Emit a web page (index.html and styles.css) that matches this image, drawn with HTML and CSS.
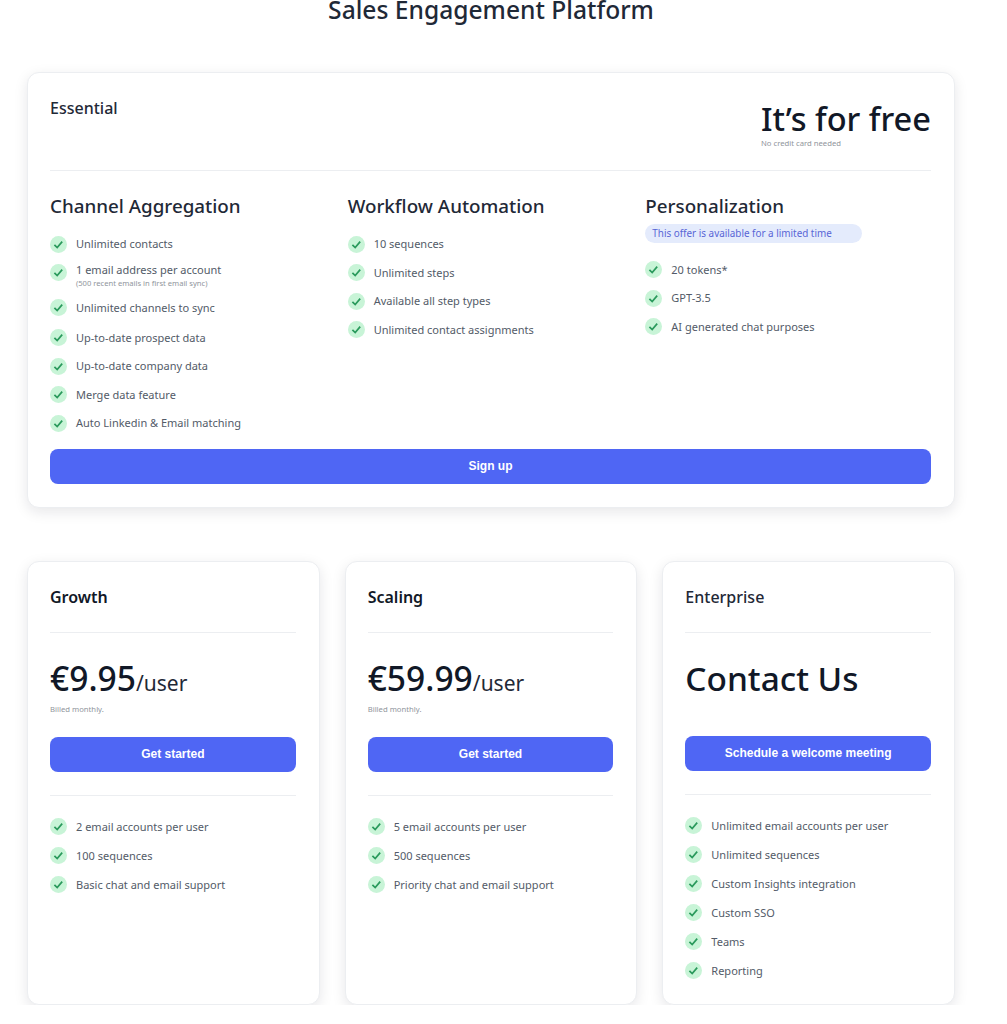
FILE: index.html
```html
<!DOCTYPE html>
<html lang="en">
<head>
    <meta charset="UTF-8">
    <meta name="viewport" content="width=device-width, initial-scale=1.0">
    <title>Sales Engagement Platform</title>
    <link rel="stylesheet" href="styles.css">
</head>
<body>

<svg class="defs" width="0" height="0" aria-hidden="true">
    <symbol id="check" viewBox="0 0 17 17">
        <circle cx="8.5" cy="8.5" r="8.5" fill="#c8f4d7"/>
        <path d="M4.4 8.8l2.8 2.8 5-6" fill="none" stroke="#2a9a5c" stroke-width="1.7"/>
    </symbol>
</svg>

<div class="page">
    <h1>Sales Engagement Platform</h1>

    <!-- Free plan -->
    <div class="card free-card">
        <div class="free-top">
            <div class="plan-name">Essential</div>
            <div>
                <div class="free-price">It’s for free</div>
                <div class="fine">No credit card needed</div>
            </div>
        </div>

        <div class="free-columns">
            <div>
                <h3>Channel Aggregation</h3>
                <ul class="features">
                    <li><svg class="tick"><use href="#check"/></svg>Unlimited contacts</li>
                    <li class="two-line"><svg class="tick"><use href="#check"/></svg><span>1 email address per account<small>(500 recent emails in first email sync)</small></span></li>
                    <li class="wide-after"><svg class="tick"><use href="#check"/></svg>Unlimited channels to sync</li>
                    <li><svg class="tick"><use href="#check"/></svg>Up-to-date prospect data</li>
                    <li><svg class="tick"><use href="#check"/></svg>Up-to-date company data</li>
                    <li><svg class="tick"><use href="#check"/></svg>Merge data feature</li>
                    <li><svg class="tick"><use href="#check"/></svg>Auto Linkedin &amp; Email matching</li>
                </ul>
            </div>
            <div>
                <h3>Workflow Automation</h3>
                <ul class="features">
                    <li><svg class="tick"><use href="#check"/></svg>10 sequences</li>
                    <li><svg class="tick"><use href="#check"/></svg>Unlimited steps</li>
                    <li><svg class="tick"><use href="#check"/></svg>Available all step types</li>
                    <li><svg class="tick"><use href="#check"/></svg>Unlimited contact assignments</li>
                </ul>
            </div>
            <div>
                <h3>Personalization</h3>
                <div class="offer">This offer is available for a limited time</div>
                <ul class="features after-offer">
                    <li><svg class="tick"><use href="#check"/></svg>20 tokens*</li>
                    <li><svg class="tick"><use href="#check"/></svg>GPT-3.5</li>
                    <li><svg class="tick"><use href="#check"/></svg>AI generated chat purposes</li>
                </ul>
            </div>
        </div>

        <a class="btn" href="#">Sign up</a>
    </div>

    <!-- Paid plans -->
    <div class="plans">
        <div class="card plan">
            <div class="plan-name strong">Growth</div>
            <div class="price"><b>€9.95</b>/user</div>
            <div class="fine">Billed monthly.</div>
            <a class="btn" href="#">Get started</a>
            <ul class="features bordered">
                <li><svg class="tick"><use href="#check"/></svg>2 email accounts per user</li>
                <li><svg class="tick"><use href="#check"/></svg>100 sequences</li>
                <li><svg class="tick"><use href="#check"/></svg>Basic chat and email support</li>
            </ul>
        </div>

        <div class="card plan">
            <div class="plan-name strong">Scaling</div>
            <div class="price"><b>€59.99</b>/user</div>
            <div class="fine">Billed monthly.</div>
            <a class="btn" href="#">Get started</a>
            <ul class="features bordered">
                <li><svg class="tick"><use href="#check"/></svg>5 email accounts per user</li>
                <li><svg class="tick"><use href="#check"/></svg>500 sequences</li>
                <li><svg class="tick"><use href="#check"/></svg>Priority chat and email support</li>
            </ul>
        </div>

        <div class="card plan">
            <div class="plan-name">Enterprise</div>
            <div class="price contact"><b>Contact Us</b></div>
            <a class="btn" href="#">Schedule a welcome meeting</a>
            <ul class="features bordered">
                <li><svg class="tick"><use href="#check"/></svg>Unlimited email accounts per user</li>
                <li><svg class="tick"><use href="#check"/></svg>Unlimited sequences</li>
                <li><svg class="tick"><use href="#check"/></svg>Custom Insights integration</li>
                <li><svg class="tick"><use href="#check"/></svg>Custom SSO</li>
                <li><svg class="tick"><use href="#check"/></svg>Teams</li>
                <li><svg class="tick"><use href="#check"/></svg>Reporting</li>
            </ul>
        </div>
    </div>
</div>

</body>
</html>
```

FILE: styles.css
```css
body {
    font-family: 'Noto Sans', 'Open Sans', sans-serif;
    background: #fff;
    color: #111827;
    margin: 0;
    overflow: hidden;
}

.defs {
    position: absolute;
}

.page {
    width: 928px;
    margin-left: 27px;
}

h1 {
    margin: -7px 0 45px;
    font-size: 24.6px;
    line-height: 34px;
    font-weight: 500;
    text-align: center;
    color: #1f2937;
}

.card {
    background: #fff;
    border: 1px solid #eceef1;
    border-radius: 12px;
    box-shadow: 0 4px 14px rgba(17, 24, 39, 0.1);
    box-sizing: border-box;
}

.free-card {
    height: 436px;
    padding: 23px 23px 22px 22px;
}

.free-top {
    display: flex;
    justify-content: space-between;
    height: 74px;
    border-bottom: 1px solid #eceef1;
}

.plan-name {
    font-size: 16px;
    line-height: 24px;
    font-weight: 500;
    color: #1f2937;
}

.plan-name.strong {
    font-weight: 600;
    color: #111827;
}

.free-price {
    margin-top: 4px;
    font-size: 32.6px;
    line-height: 38px;
    font-weight: 500;
}

.fine {
    font-size: 7.7px;
    line-height: 10px;
    color: #90959c;
}

.free-columns {
    display: grid;
    grid-template-columns: repeat(3, 1fr);
    gap: 12px;
    height: 278px;
    padding-top: 22px;
    box-sizing: border-box;
}

h3 {
    margin: 0;
    font-size: 18.8px;
    line-height: 26px;
    font-weight: 500;
    color: #1f2937;
}

.features {
    list-style: none;
    margin: 16.6px 0 0;
    padding: 0;
    font-size: 11px;
    color: #535b68;
}

.features li {
    display: flex;
    align-items: center;
    gap: 9px;
    height: 17px;
    line-height: 16px;
    margin-bottom: 11.6px;
}

.features li.two-line {
    height: 26px;
    align-items: flex-start;
    margin-bottom: 9px;
}

.two-line span {
    margin-top: -2px;
}

.features li.wide-after {
    margin-bottom: 13px;
}

.features small {
    display: block;
    font-size: 7.6px;
    line-height: 10px;
    color: #90959c;
}

.tick {
    width: 17px;
    height: 17px;
    flex: none;
}

.offer {
    width: 217px;
    height: 19px;
    margin-top: 5px;
    padding-left: 7px;
    box-sizing: border-box;
    border-radius: 10px;
    background: #e4ebfc;
    color: #5865d6;
    font-size: 9.9px;
    line-height: 18px;
}

.features.after-offer {
    margin-top: 18.2px;
}

.btn {
    display: block;
    height: 35px;
    border-radius: 8px;
    background: #4f66f4;
    color: #fff;
    font-family: 'Liberation Sans', Arial, sans-serif;
    font-size: 12px;
    font-weight: bold;
    line-height: 35px;
    text-align: center;
    text-decoration: none;
}

.plans {
    display: grid;
    grid-template-columns: repeat(3, 1fr);
    gap: 25px;
    margin-top: 53px;
}

.plan {
    height: 444px;
    padding: 23px 23px 0 22px;
}

.plan .plan-name {
    height: 47px;
    border-bottom: 1px solid #eceef1;
}

.price {
    margin-top: 21px;
    font-size: 21px;
    line-height: 48px;
    color: #1f2937;
}

.price b {
    font-size: 33.6px;
    font-weight: 500;
    color: #111827;
}

.plan .fine {
    margin: -3px 0 0;
}

.plan .btn {
    margin-top: 23px;
}

.price.contact {
    height: 83px;
    margin-bottom: -1px;
}

.price.contact b {
    font-size: 33.4px;
}

.plan .price.contact + .btn {
    margin-top: 0;
}

.features.bordered {
    margin-top: 23px;
    padding-top: 22.4px;
    border-top: 1px solid #eceef1;
}

.bordered li {
    margin-bottom: 12px;
}
```
